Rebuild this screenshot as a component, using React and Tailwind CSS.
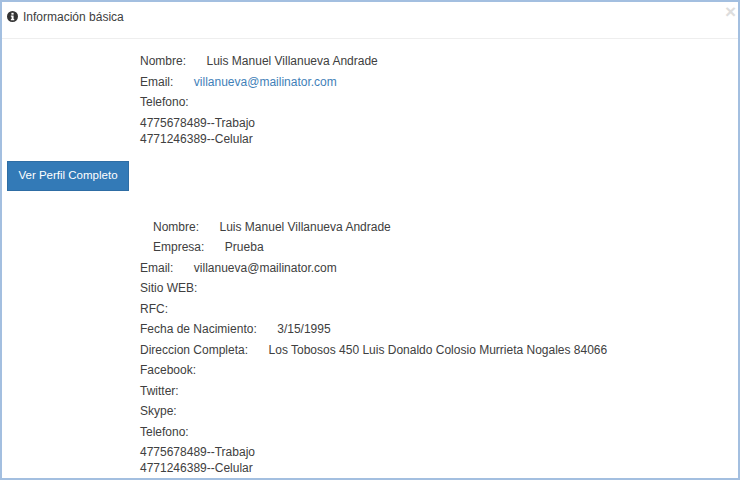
import React from "react";

function Row({ label, value, link, indent }) {
  return (
    <div className={`h-[20.5px] flex gap-[20.5px] leading-[17px] ${indent ? "pl-[13px]" : ""}`}>
      <span>{label}</span>
      {value && <span className={link ? "text-[#3f7fb8]" : ""}>{value}</span>}
    </div>
  );
}

function Phones() {
  return (
    <div className="leading-[16px]">
      <div>4775678489--Trabajo</div>
      <div>4771246389--Celular</div>
    </div>
  );
}

export default function App() {
  const name = "Luis Manuel Villanueva Andrade";
  const email = "villanueva@mailinator.com";

  return (
    <div className="relative w-[740px] h-[480px] overflow-hidden bg-white border-2 border-[#a3bfe0] font-['Liberation_Sans',Arial,sans-serif] text-[12px] text-[#404040]">
      {/* Header */}
      <div className="h-[37px] border-b border-[#eeeeee] flex items-center pl-[5px] pb-[7px] gap-[5px]">
        <svg width="11" height="11" viewBox="0 0 12 12" className="shrink-0">
          <circle cx="6" cy="6" r="6" fill="#333333" />
          <rect x="4.8" y="2" width="2.4" height="2" fill="#ffffff" />
          <path d="M4.2 5h3v3.6h.7V10H4.2V8.6h.8V6.3h-.8z" fill="#ffffff" />
        </svg>
        <span>Información básica</span>
      </div>
      <span className="absolute top-0 right-[2px] text-[19px] leading-[20px] font-bold text-[#dddddd]">×</span>

      {/* Contenido */}
      <div className="pt-[14px] pl-[138px]">
        <Row label="Nombre:" value={name} />
        <Row label="Email:" value={email} link />
        <Row label="Telefono:" />
        <Phones />
      </div>

      <button className="block mt-[14px] ml-[5px] w-[122px] h-[30px] bg-[#337ab7] border border-[#2e6da4] text-white text-[11.5px]">
        Ver Perfil Completo
      </button>

      <div className="pt-[28px] pl-[138px]">
        <Row label="Nombre:" value={name} indent />
        <Row label="Empresa:" value="Prueba" indent />
        <Row label="Email:" value={email} />
        <Row label="Sitio WEB:" />
        <Row label="RFC:" />
        <Row label="Fecha de Nacimiento:" value="3/15/1995" />
        <Row label="Direccion Completa:" value="Los Tobosos 450 Luis Donaldo Colosio Murrieta Nogales 84066" />
        <Row label="Facebook:" />
        <Row label="Twitter:" />
        <Row label="Skype:" />
        <Row label="Telefono:" />
        <Phones />
      </div>
    </div>
  );
}
